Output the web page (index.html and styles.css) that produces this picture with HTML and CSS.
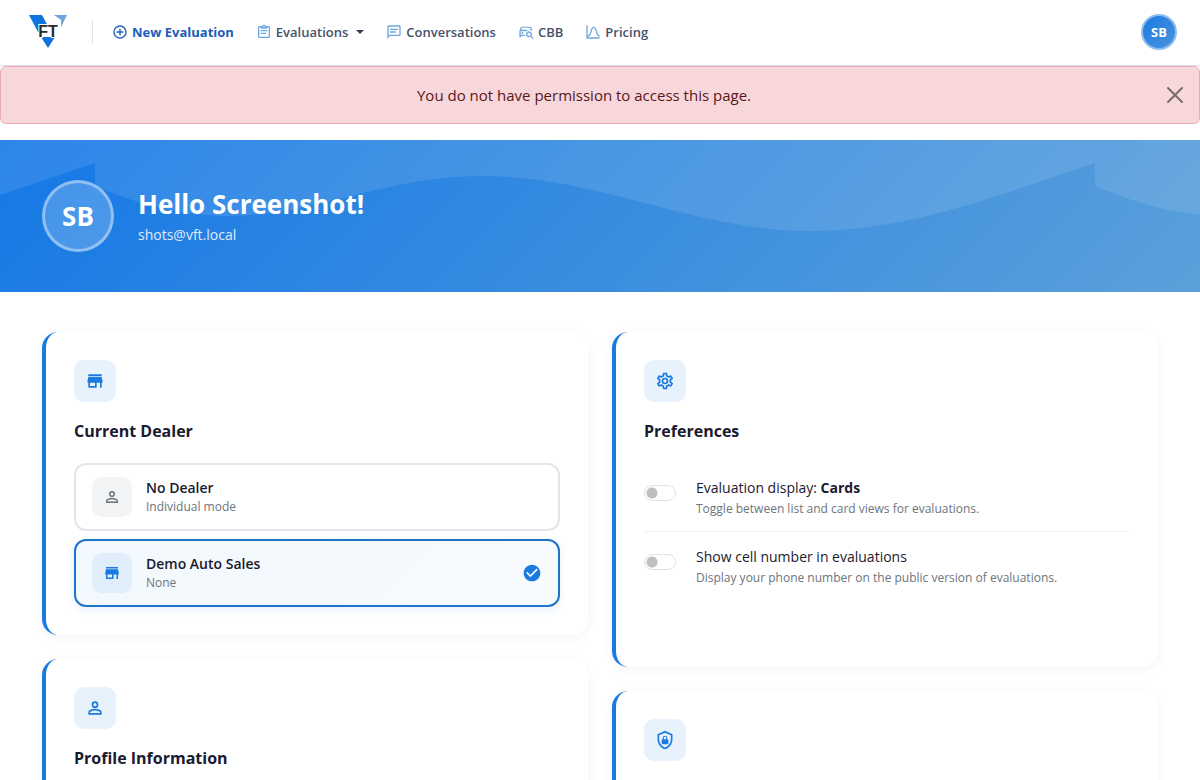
FILE: index.html
```html
<!DOCTYPE html>
<html lang="en">
<head>
    <meta charset="UTF-8">
    <meta name="viewport" content="width=device-width, initial-scale=1.0">
    <title>My Account</title>
    <link rel="stylesheet" href="styles.css">
</head>
<body>
    <header class="navbar">
        <a class="brand" href="#" aria-label="Home">
            <svg class="logo" viewBox="0 0 40 34">
                <path fill="#0f73e0" d="M0 0h13l7 13h-8v4H9z"/>
                <path fill="#6fa5dd" d="M25 0h13l-6 12V5z"/>
                <path fill="#0f73e0" d="M12 22h14l-7 11z"/>
                <text class="logo-text" x="19" y="22" text-anchor="middle">FT</text>
            </svg>
        </a>
        <nav class="nav">
            <a class="nav-link primary" href="#">
                <svg class="icon" viewBox="0 0 24 24"><path d="M12,20C7.59,20 4,16.41 4,12C4,7.59 7.59,4 12,4C16.41,4 20,7.59 20,12C20,16.41 16.41,20 12,20M12,2A10,10 0 0,0 2,12A10,10 0 0,0 12,22A10,10 0 0,0 22,12A10,10 0 0,0 12,2M13,7H11V11H7V13H11V17H13V13H17V11H13V7Z"/></svg>
                New Evaluation
            </a>
            <a class="nav-link dropdown" href="#">
                <svg class="icon" viewBox="0 0 24 24"><path d="M19,3H14.82C14.4,1.84 13.3,1 12,1C10.7,1 9.6,1.84 9.18,3H5A2,2 0 0,0 3,5V19A2,2 0 0,0 5,21H19A2,2 0 0,0 21,19V5A2,2 0 0,0 19,3M12,3A1,1 0 0,1 13,4A1,1 0 0,1 12,5A1,1 0 0,1 11,4A1,1 0 0,1 12,3M7,7H17V5H19V19H5V5H7V7M17,11H7V9H17V11M15,15H7V13H15V15Z"/></svg>
                Evaluations
            </a>
            <a class="nav-link" href="#">
                <svg class="icon" viewBox="0 0 24 24"><path d="M20 2H4C2.9 2 2 2.9 2 4V22L6 18H20C21.1 18 22 17.1 22 16V4C22 2.9 21.1 2 20 2M20 16H5.2L4 17.2V4H20V16M6 7H18V9H6V7M6 11H15V13H6V11Z"/></svg>
                Conversations
            </a>
            <a class="nav-link" href="#">
                <svg class="icon" viewBox="0 0 24 24"><path d="M5.5 4C4.8 4 4.3 4.4 4.1 5L2 11V19C2 19.6 2.4 20 3 20H4C4.6 20 5 19.6 5 19V18H10.5A6.5 6.5 0 0 1 10 16H4V11H12.2A6.5 6.5 0 0 1 21.7 11L19.9 5C19.7 4.4 19.2 4 18.5 4H5.5M5.9 5.5H18.1L19 8.5H4.9L5.9 5.5M6.5 12A1.5 1.5 0 0 0 6.5 15A1.5 1.5 0 0 0 6.5 12M16.5 11A4.5 4.5 0 1 0 18.9 19.3L22 22.4L23.4 21L20.3 17.9A4.5 4.5 0 0 0 16.5 11M16.5 13A2.5 2.5 0 1 1 16.5 18A2.5 2.5 0 0 1 16.5 13Z"/></svg>
                CBB
            </a>
            <a class="nav-link" href="#">
                <svg class="icon" viewBox="0 0 24 24"><path d="M9.96,11.31C10.82,8.1 11.5,6 13,6C14.5,6 15.18,8.1 16.04,11.31C17,14.92 18.1,19 22,19V17C19.8,17 19,14.54 17.97,10.8C17.08,7.46 16.15,4 13,4C9.85,4 8.92,7.46 8.03,10.8C7.03,14.54 6.2,17 4,17V2H2V22H22V20H4V19C7.9,19 9,14.92 9.96,11.31Z"/></svg>
                Pricing
            </a>
        </nav>
        <button class="user-btn" type="button">SB</button>
    </header>

    <div class="alert" role="alert">
        <span>You do not have permission to access this page.</span>
        <button class="close-btn" type="button" aria-label="Close">
            <svg viewBox="0 0 16 16"><path d="M1 1l14 14M15 1L1 15"/></svg>
        </button>
    </div>

    <section class="hero">
        <div class="hero-avatar">SB</div>
        <div>
            <h1>Hello Screenshot!</h1>
            <p class="hero-email">shots@vft.local</p>
        </div>
    </section>

    <main class="cards">
        <div class="column">
            <section class="card">
                <div class="card-icon">
                    <svg class="icon" viewBox="0 0 24 24"><path d="M12,18H6V14H12M21,14V12L20,7H4L3,12V14H4V20H14V14H18V20H20V14M20,4H4V6H20V4Z"/></svg>
                </div>
                <h2>Current Dealer</h2>
                <div class="dealer-list">
                    <button class="dealer" type="button">
                        <span class="dealer-icon">
                            <svg class="icon" viewBox="0 0 24 24"><path d="M12,4A4,4 0 0,1 16,8A4,4 0 0,1 12,12A4,4 0 0,1 8,8A4,4 0 0,1 12,4M12,6A2,2 0 0,0 10,8A2,2 0 0,0 12,10A2,2 0 0,0 14,8A2,2 0 0,0 12,6M12,13C14.67,13 20,14.33 20,17V20H4V17C4,14.33 9.33,13 12,13M12,14.9C9.03,14.9 5.9,16.36 5.9,17V18.1H18.1V17C18.1,16.36 14.97,14.9 12,14.9Z"/></svg>
                        </span>
                        <span class="dealer-text">
                            <span class="dealer-name">No Dealer</span>
                            <span class="dealer-sub">Individual mode</span>
                        </span>
                    </button>
                    <button class="dealer active" type="button">
                        <span class="dealer-icon">
                            <svg class="icon" viewBox="0 0 24 24"><path d="M12,18H6V14H12M21,14V12L20,7H4L3,12V14H4V20H14V14H18V20H20V14M20,4H4V6H20V4Z"/></svg>
                        </span>
                        <span class="dealer-text">
                            <span class="dealer-name">Demo Auto Sales</span>
                            <span class="dealer-sub">None</span>
                        </span>
                        <svg class="icon check" viewBox="0 0 24 24"><path d="M12 2C6.5 2 2 6.5 2 12S6.5 22 12 22 22 17.5 22 12 17.5 2 12 2M10 17L5 12L6.41 10.59L10 14.17L17.59 6.58L19 8L10 17Z"/></svg>
                    </button>
                </div>
            </section>

            <section class="card">
                <div class="card-icon">
                    <svg class="icon" viewBox="0 0 24 24"><path d="M12,4A4,4 0 0,1 16,8A4,4 0 0,1 12,12A4,4 0 0,1 8,8A4,4 0 0,1 12,4M12,6A2,2 0 0,0 10,8A2,2 0 0,0 12,10A2,2 0 0,0 14,8A2,2 0 0,0 12,6M12,13C14.67,13 20,14.33 20,17V20H4V17C4,14.33 9.33,13 12,13M12,14.9C9.03,14.9 5.9,16.36 5.9,17V18.1H18.1V17C18.1,16.36 14.97,14.9 12,14.9Z"/></svg>
                </div>
                <h2>Profile Information</h2>
            </section>
        </div>

        <div class="column">
            <section class="card">
                <div class="card-icon">
                    <svg class="icon" viewBox="0 0 24 24"><path d="M12,8A4,4 0 0,1 16,12A4,4 0 0,1 12,16A4,4 0 0,1 8,12A4,4 0 0,1 12,8M12,10A2,2 0 0,0 10,12A2,2 0 0,0 12,14A2,2 0 0,0 14,12A2,2 0 0,0 12,10M10,22C9.75,22 9.54,21.82 9.5,21.58L9.13,18.93C8.5,18.68 7.96,18.34 7.44,17.94L4.95,18.95C4.73,19.03 4.46,18.95 4.34,18.73L2.34,15.27C2.21,15.05 2.27,14.78 2.46,14.63L4.57,12.97L4.5,12L4.57,11L2.46,9.37C2.27,9.22 2.21,8.95 2.34,8.73L4.34,5.27C4.46,5.05 4.73,4.96 4.95,5.05L7.44,6.05C7.96,5.66 8.5,5.32 9.13,5.07L9.5,2.42C9.54,2.18 9.75,2 10,2H14C14.25,2 14.46,2.18 14.5,2.42L14.87,5.07C15.5,5.32 16.04,5.66 16.56,6.05L19.05,5.05C19.27,4.96 19.54,5.05 19.66,5.27L21.66,8.73C21.79,8.95 21.73,9.22 21.54,9.37L19.43,11L19.5,12L19.43,13L21.54,14.63C21.73,14.78 21.79,15.05 21.66,15.27L19.66,18.73C19.54,18.95 19.27,19.04 19.05,18.95L16.56,17.95C16.04,18.34 15.5,18.68 14.87,18.93L14.5,21.58C14.46,21.82 14.25,22 14,22H10M11.25,4L10.88,6.61C9.68,6.86 8.62,7.5 7.85,8.39L5.44,7.35L4.69,8.65L6.8,10.2C6.4,11.37 6.4,12.64 6.8,13.8L4.68,15.36L5.43,16.66L7.86,15.62C8.63,16.5 9.68,17.14 10.87,17.38L11.24,20H12.76L13.13,17.39C14.32,17.14 15.37,16.5 16.14,15.62L18.57,16.66L19.32,15.36L17.2,13.81C17.6,12.64 17.6,11.37 17.2,10.2L19.31,8.65L18.56,7.35L16.15,8.39C15.38,7.5 14.32,6.86 13.12,6.62L12.75,4H11.25Z"/></svg>
                </div>
                <h2>Preferences</h2>
                <div class="prefs">
                    <div class="pref">
                        <input class="switch" type="checkbox" id="displayMode">
                        <label for="displayMode">
                            <span class="pref-title">Evaluation display: <strong>Cards</strong></span>
                            <span class="pref-sub">Toggle between list and card views for evaluations.</span>
                        </label>
                    </div>
                    <div class="pref">
                        <input class="switch" type="checkbox" id="showCell">
                        <label for="showCell">
                            <span class="pref-title">Show cell number in evaluations</span>
                            <span class="pref-sub">Display your phone number on the public version of evaluations.</span>
                        </label>
                    </div>
                </div>
            </section>

            <section class="card">
                <div class="card-icon">
                    <svg class="icon" viewBox="0 0 24 24"><path d="M21,11C21,16.55 17.16,21.74 12,23C6.84,21.74 3,16.55 3,11V5L12,1L21,5V11M12,21C15.75,20 19,15.54 19,11.22V6.3L12,3.18L5,6.3V11.22C5,15.54 8.25,20 12,21M14.8,11V9.5C14.8,8.1 13.4,7 12,7C10.6,7 9.2,8.1 9.2,9.5V11C8.6,11 8,11.6 8,12.2V15.7C8,16.4 8.6,17 9.2,17H14.7C15.4,17 16,16.4 16,15.8V12.3C16,11.6 15.4,11 14.8,11M13.5,11H10.5V9.5C10.5,8.7 11.2,8.2 12,8.2C12.8,8.2 13.5,8.7 13.5,9.5V11Z"/></svg>
                </div>
            </section>
        </div>
    </main>
</body>
</html>
```

FILE: styles.css
```css
* {
    box-sizing: border-box;
}

body {
    margin: 0;
    font-family: "Segoe UI", "Open Sans", "Noto Sans", sans-serif;
    font-size: 15px;
    color: #1a1a2e;
    background-color: #fff;
}

h1, h2, p {
    margin: 0;
}

button {
    font-family: inherit;
    cursor: pointer;
}

.icon {
    width: 16px;
    height: 16px;
    fill: currentColor;
    flex-shrink: 0;
}

/* Navbar */
.navbar {
    display: flex;
    align-items: center;
    height: 66px;
    padding: 0 23px 2px 29px;
    border-bottom: 1px solid #dee2e6;
}

.brand {
    display: flex;
    padding-right: 23px;
    border-right: 1px solid #dee2e6;
    height: 24px;
    align-items: center;
}

.logo {
    width: 40px;
    height: 34px;
}

.logo-text {
    font-family: "Liberation Sans", Arial, sans-serif;
    font-size: 16px;
    font-weight: bold;
    fill: #2b2b2b;
    stroke: #fff;
    stroke-width: 2px;
    paint-order: stroke;
}

.nav {
    display: flex;
    flex: 1;
    gap: 22px;
    padding-left: 19px;
}

.nav-link {
    display: flex;
    align-items: center;
    gap: 4px;
    font-size: 13px;
    line-height: 20px;
    font-weight: 600;
    color: #45526a;
    text-decoration: none;
}

.nav-link .icon {
    color: #6fa8e0;
}

.nav-link.primary,
.nav-link.primary .icon {
    font-weight: 700;
    color: #1a5cb8;
}

.dropdown::after {
    content: "";
    margin-left: 4px;
    border: 4px solid transparent;
    border-top-color: #344054;
    border-bottom: 0;
}

.user-btn {
    width: 36px;
    height: 36px;
    padding: 0;
    border: 2px solid #8fbdf0;
    border-radius: 50%;
    background: linear-gradient(135deg, #1a7ae2, #4a94dc);
    color: #fff;
    font-size: 13px;
    font-weight: 700;
}

/* Alert */
.alert {
    display: flex;
    align-items: center;
    justify-content: center;
    position: relative;
    height: 58px;
    padding: 0 48px 0 16px;
    margin-bottom: 16px;
    border: 1px solid #eba9b1;
    border-radius: 6px;
    background-color: #f8d7da;
    color: #58151c;
}

.close-btn {
    position: absolute;
    right: 16px;
    display: flex;
    padding: 0;
    border: 0;
    background: none;
}

.close-btn svg {
    width: 16px;
    height: 16px;
    fill: none;
    stroke: #7c6b6d;
    stroke-width: 2;
    stroke-linecap: round;
    overflow: visible;
}

/* Hero */
.hero {
    display: flex;
    align-items: center;
    gap: 24px;
    padding: 40px 42px;
    background:
        url("data:image/svg+xml,%3Csvg xmlns='http://www.w3.org/2000/svg' viewBox='0 0 1000 152'%3E%3Cpath fill='white' fill-opacity='.1' d='M0 46C50 67 90 76 135 76C220 76 290 36 385 36C505 36 600 91 715 91C810 91 890 60 1000 23V0H0Z'/%3E%3C/svg%3E") 95px 0 / 1000px 152px repeat-x,
        linear-gradient(135deg, #1478e6, #5ba0da);
    color: #fff;
}

.hero-avatar {
    display: flex;
    align-items: center;
    justify-content: center;
    width: 72px;
    height: 72px;
    border: 3px solid rgba(255, 255, 255, 0.4);
    border-radius: 50%;
    background-color: rgba(255, 255, 255, 0.2);
    font-size: 26px;
    font-weight: 700;
}

.hero h1 {
    margin-bottom: 4px;
    font-size: 26px;
    line-height: 34px;
    font-weight: 700;
}

.hero-email {
    font-size: 14px;
    line-height: 20px;
    opacity: 0.85;
}

/* Cards */
.cards {
    display: grid;
    grid-template-columns: 1fr 1fr;
    gap: 24px;
    padding: 40px 42px;
}

.column {
    display: flex;
    flex-direction: column;
    gap: 24px;
}

.card {
    padding: 28px;
    border-left: 4px solid #1a7ae0;
    border-radius: 16px;
    background-color: #fff;
    box-shadow: 0 2px 12px rgba(0, 0, 0, 0.05);
}

.card-icon {
    display: flex;
    align-items: center;
    justify-content: center;
    width: 42px;
    height: 42px;
    margin-bottom: 16px;
    border-radius: 10px;
    background-color: #e8f2fc;
    color: #1a7ae0;
}

.card-icon .icon,
.check {
    width: 20px;
    height: 20px;
}

.card h2 {
    margin-bottom: 19px;
    font-size: 16px;
    line-height: 26px;
    font-weight: 700;
}

.dealer-list {
    display: flex;
    flex-direction: column;
    gap: 8px;
}

.dealer {
    display: flex;
    align-items: center;
    gap: 14px;
    width: 100%;
    padding: 12px 16px;
    border: 2px solid #e2e6ec;
    border-radius: 12px;
    background-color: #fff;
    color: #1a1a2e;
    text-align: left;
}

.dealer.active {
    border-color: #2074c8;
    background: linear-gradient(135deg, #f2f8fd, #f8fbfe);
    box-shadow: 0 2px 8px rgba(26, 122, 224, 0.12);
}

.dealer-icon {
    display: flex;
    align-items: center;
    justify-content: center;
    width: 40px;
    height: 40px;
    border-radius: 10px;
    background-color: #f3f4f6;
    color: #6c757d;
}

.dealer-icon .icon {
    width: 18px;
    height: 18px;
}

.active .dealer-icon {
    background-color: #e0edfa;
    color: #1a7ae0;
}

.dealer-text {
    display: flex;
    flex: 1;
    flex-direction: column;
}

.dealer-name {
    font-size: 14px;
    line-height: 20px;
    font-weight: 600;
}

.dealer-sub {
    font-size: 12px;
    line-height: 18px;
    color: #6c757d;
}

.check {
    color: #1a7ae0;
}

/* Preferences */
.prefs {
    padding-bottom: 39px;
}

.pref {
    display: flex;
    gap: 20px;
    padding: 14px 0 12px;
}

.pref + .pref {
    border-top: 1px solid #eef0f3;
}

.pref label {
    display: flex;
    flex-direction: column;
}

.pref-title {
    font-size: 14px;
    line-height: 21px;
}

.pref-sub {
    font-size: 12px;
    line-height: 21px;
    color: #6c757d;
}

.switch {
    appearance: none;
    width: 32px;
    height: 16px;
    margin: 8px 0 0;
    border: 1px solid #dee2e6;
    border-radius: 8px;
    background: radial-gradient(circle at 7px 7px, #bfbfbf 5px, transparent 6px);
}

.switch:checked {
    border-color: #1a7ae0;
    background: radial-gradient(circle at 23px 7px, #fff 5px, #1a7ae0 6px);
}

/* Small screens */
@media (max-width: 768px) {
    .navbar {
        height: auto;
        padding: 12px 16px;
    }

    .nav {
        flex-wrap: wrap;
        gap: 8px 16px;
    }

    .hero {
        padding: 32px 16px;
    }

    .cards {
        grid-template-columns: 1fr;
        padding: 24px 16px;
    }
}
```
